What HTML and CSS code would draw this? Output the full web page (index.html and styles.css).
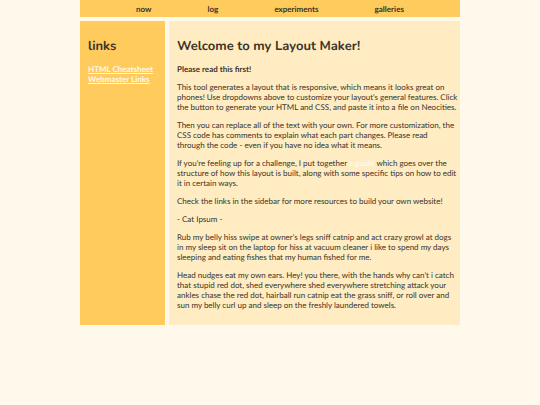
FILE: index.html
```html
<!DOCTYPE html>
<html lang="en">
<head>
  <meta charset="UTF-8">
  <meta name="viewport" content="width=device-width, initial-scale=1.0">
  <title>Welcome to my Layout Maker!</title>
  <link rel="stylesheet" href="styles.css">
</head>
<body>
  <div class="layout">
    <header class="header">
      <nav class="nav">
        <a href="#now">now</a>
        <a href="#log">log</a>
        <a href="#experiments">experiments</a>
        <a href="#galleries">galleries</a>
      </nav>
    </header>
    <aside class="sidebar">
      <h2>links</h2>
      <ul class="links">
        <li><a href="#cheatsheet">HTML Cheatsheet</a></li>
        <li><a href="#webmaster">Webmaster Links</a></li>
      </ul>
    </aside>
    <main class="content">
      <h1>Welcome to my Layout Maker!</h1>
      <p><strong>Please read this first!</strong></p>
      <p>This tool generates a layout that is responsive, which means it looks great on<br>
        phones! Use dropdowns above to customize your layout's general features. Click<br>
        the button to generate your HTML and CSS, and paste it into a file on Neocities.</p>
      <p>Then you can replace all of the text with your own. For more customization, the<br>
        CSS code has comments to explain what each part changes. Please read<br>
        through the code - even if you have no idea what it means.</p>
      <p>If you're feeling up for a challenge, I put together <a href="#guide">a guide</a> which goes over the<br>
        structure of how this layout is built, along with some specific tips on how to edit<br>
        it in certain ways.</p>
      <p>Check the links in the sidebar for more resources to build your own website!</p>
      <p>- Cat Ipsum -</p>
      <p>Rub my belly hiss swipe at owner's legs sniff catnip and act crazy growl at dogs<br>
        in my sleep sit on the laptop for hiss at vacuum cleaner i like to spend my days<br>
        sleeping and eating fishes that my human fished for me.</p>
      <p>Head nudges eat my own ears. Hey! you there, with the hands why can't i catch<br>
        that stupid red dot, shed everywhere shed everywhere stretching attack your<br>
        ankles chase the red dot, hairball run catnip eat the grass sniff, or roll over and<br>
        sun my belly curl up and sleep on the freshly laundered towels.</p>
    </main>
  </div>
</body>
</html>
```

FILE: styles.css
```css
* { box-sizing: border-box; }
body { margin: 0; background: #fef9ea; color: #3b3428; font-family: Lato, sans-serif; font-size: 8px; line-height: 10px; text-rendering: geometricPrecision; }
.layout { display: grid; grid-template-columns: 85px 1fr; gap: 4px; margin: 0 80px; }
.header { grid-column: 1 / -1; background: #ffcb5c; padding: 4px 0 3px; }
.nav { display: flex; justify-content: space-evenly; }
.nav a { color: #3b3428; font-weight: bold; text-decoration: none; }
.sidebar { background: #ffcb5c; padding: 17px 8px; }
.content { background: #ffecc2; padding: 17px 1px 15px 8px; }
h1, h2 { margin: 0 0 10px; font-family: Nunito, Lato, sans-serif; font-size: 13px; line-height: 16px; }
p { margin: 0 0 8px; }
p:last-child { margin-bottom: 0; }
.links { list-style: none; margin: 0; padding: 0; }
.links a { color: #fef9ea; font-weight: bold; text-decoration: underline; }
.content a { color: #fef9ea; font-weight: bold; text-decoration: none; }
```
